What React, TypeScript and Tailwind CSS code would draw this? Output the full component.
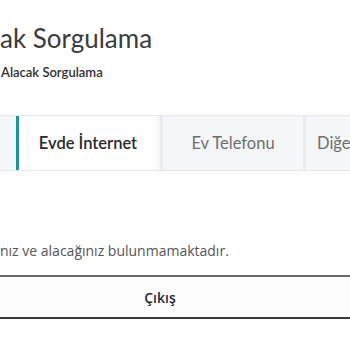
import React from 'react';

const tabs = [
  { label: 'Evde İnternet', active: true },
  { label: 'Ev Telefonu', active: false },
  { label: 'Diğer', active: false },
];

export default function App() {
  return (
    <div className="w-[350px] h-[350px] overflow-hidden bg-white">
      {/* Header */}
      <div className="pt-[22px] pl-px" style={{ fontFamily: 'Lato, "Noto Sans", sans-serif' }}>
        <h1 className="text-[26px] leading-[32px] text-[#3b3b3b] font-normal whitespace-nowrap -ml-[1px]">
          ak Sorgulama
        </h1>
        <div className="mt-[10px] text-[13px] leading-[16px] font-semibold text-[#2f2f2f] whitespace-nowrap">
          Alacak Sorgulama
        </div>
      </div>

      {/* Tabs */}
      <div
        className="mt-[35px] flex w-[520px] h-[56px] border-y border-[#e6e8eb] bg-[#f5f6f8]"
        style={{ fontFamily: 'Lato, "Noto Sans", sans-serif' }}
      >
        <div className="w-[16px] shrink-0" />
        <div className="w-[141px] shrink-0 flex items-center justify-center bg-white border-l-[3px] border-[#1c9699] text-[16.5px] font-semibold text-[#2a2a2a]">
          {tabs[0].label}
        </div>
        <div className="w-[143px] shrink-0 ml-[3px] flex items-center justify-center border-l-[3px] border-[#e9ebee] text-[16.5px] text-[#6e6e6e]">
          {tabs[1].label}
        </div>
        <div className="w-[143px] shrink-0 flex items-center pl-[11px] border-l-[3px] border-[#e9ebee] text-[16.5px] text-[#6e6e6e]">
          {tabs[2].label}
        </div>
      </div>

      {/* Message */}
      <p
        className="mt-[70px] text-[14px] leading-[20px] text-[#555] whitespace-nowrap"
        style={{ fontFamily: '"Open Sans", sans-serif' }}
      >
        nız ve alacağınız bulunmamaktadır.
      </p>

      {/* Exit button */}
      <button
        className="mt-[14px] -ml-[40px] w-[400px] h-[44px] flex items-center justify-center bg-[#fdfdfd] border-t-2 border-b-2 border-t-[#6a6a6a] border-b-[#3a3a3a] text-[14px] font-semibold text-[#1f2a37]"
        style={{ fontFamily: '"Open Sans", sans-serif' }}
      >
        Çıkış
      </button>
    </div>
  );
}
